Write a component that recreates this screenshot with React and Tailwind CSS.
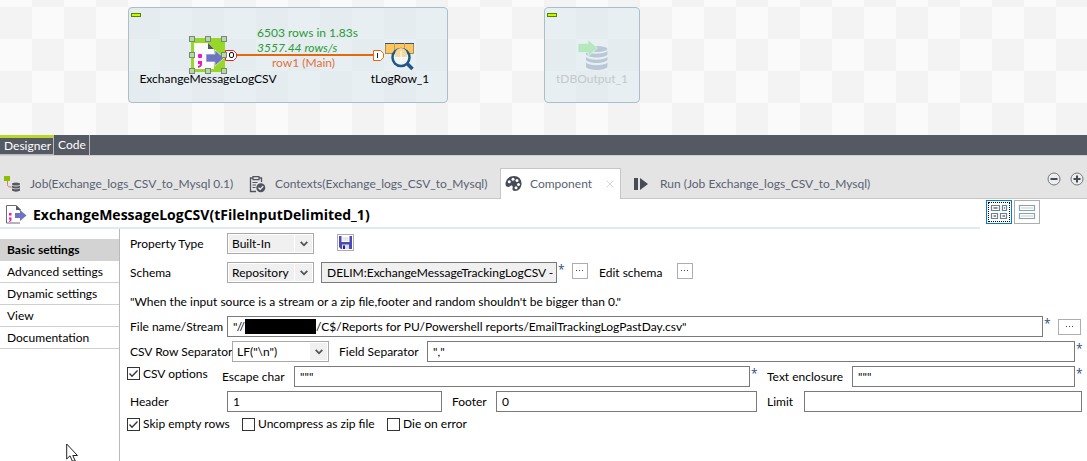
import React from "react";

function Collapse({ className }) {
  return (
    <button
      type="button"
      aria-label="Collapse"
      className={`absolute h-1 w-[10px] border border-[#5d8200] bg-[#c3fa00] ${className}`}
    />
  );
}

function DelimitedNode() {
  return (
    <svg className="absolute left-[188px] top-[35px]" width="52" height="40" viewBox="188 35 52 40">
      <rect x="191" y="38" width="34" height="34" fill="#96d728" />
      <path d="M194 43h14l6 6v20h-20z" fill="#fafafa" />
      <path d="M208 43v6h6z" fill="#555a62" />
      <rect x="198" y="54" width="4" height="4" rx="1" fill="#f512c0" />
      <path d="M198 61h4v3c0 2-1 3-4 4v-2c1 0 2-1 2-2h-2z" fill="#f512c0" />
      <path d="M206 54h9v-4l9 8-9 8v-4h-9z" fill="#6e73c3" stroke="#fff" strokeWidth=".6" />
      <path d="M225.500 50.500h8l3 3v4l-3 3h-8z" fill="#fff" stroke="#f02020" />
      <rect x="229.500" y="52.500" width="4" height="5" rx="1.500" fill="none" stroke="#111" />
      {[192, 208, 224].map((x) =>
        [39, 55, 71].map((y) =>
          x === 208 && y === 55 ? null : (
            <rect key={`${x}-${y}`} x={x - 2.5} y={y - 2.5} width="5" height="5" fill="#b2dca0" stroke="#7d847b" />
          )
        )
      )}
    </svg>
  );
}

function LogNode() {
  return (
    <svg className="absolute left-[372px] top-[41px]" width="46" height="32" viewBox="372 41 46 32">
      <path d="M373.500 50.500h7l3 3v4l-3 3h-7z" fill="#fff" stroke="#e2690f" />
      <path d="M377.500 53v5" stroke="#222" />
      <rect x="385.500" y="43.500" width="28" height="10" fill="#fcc661" stroke="#8a6a2c" strokeWidth=".7" />
      <path d="M385 43.500h29" stroke="#31587c" />
      <path d="M394.500 43v10M404.500 43v10" stroke="#d49a3c" />
      <circle cx="401" cy="57.500" r="8.500" fill="#f0f4f4" stroke="#1d5887" strokeWidth="2.500" />
      <path d="M395 54a6 6 0 0 1 12 0v3.500h-12z" fill="#f3d9a0" />
      <path d="M395 57.500h12M401 51v12" stroke="#fff" />
      <path d="M407 63.500l5.500 5.500" stroke="#1d5887" strokeWidth="3.500" />
    </svg>
  );
}

function DbNode() {
  return (
    <svg className="absolute left-[576px] top-[38px]" width="34" height="34" viewBox="576 38 34 34">
      <g fill="#b9c8d6">
        <ellipse cx="597" cy="49" rx="10.500" ry="3" />
        <path d="M586 51c3 3.500 18 3.500 21.500 0v3.500c-3 4-18.500 4-21.500 0z" />
        <path d="M586 57c3 3.500 18 3.500 21.500 0v3c-3 4-18.500 4-21.500 0z" />
        <path d="M586 62.500c3 3.500 18 3.500 21.500 0v4.500c-3 4-18.500 4-21.500 0z" />
      </g>
      <path d="M578 43.500h10v-4l9.500 8.500-9.500 8.500v-4h-10z" fill="#b5e8bf" stroke="#e6eff4" strokeWidth=".7" />
    </svg>
  );
}

function Canvas() {
  return (
    <section
      aria-label="Job canvas"
      className="relative h-[135px] overflow-hidden bg-[conic-gradient(#f3f3f3_25%,#fafafa_0_50%,#f3f3f3_0_75%,#fafafa_0)] bg-[length:64px_64px] bg-[position:32px_7px]"
    >
      <div className="absolute left-[128px] top-[7px] h-24 w-80 rounded border border-[#aabfcc] bg-[#dae7ee]/60" />
      <div className="absolute left-[544px] top-[7px] h-24 w-24 rounded border border-[#aabfcc] bg-[#dae7ee]/60" />
      <Collapse className="left-[131px] top-[13px]" />
      <Collapse className="left-[547px] top-[13px]" />
      <div className="absolute left-[236px] top-[54px] h-0.5 w-[138px] bg-[#e2690f]" />
      <DelimitedNode />
      <LogNode />
      <DbNode />
      <span className="absolute left-[257px] top-[25px] text-[#2a9b36]">6503 rows in 1.83s</span>
      <span className="absolute left-[257px] top-10 italic text-[#2a9b36]">3557.44 rows/s</span>
      <span className="absolute left-[272px] top-[55px] text-[#e2713a]">row1 (Main)</span>
      <span className="absolute left-[208px] top-[71px] -translate-x-1/2">ExchangeMessageLogCSV</span>
      <span className="absolute left-[400px] top-[71px] -translate-x-1/2">tLogRow_1</span>
      <span className="absolute left-[592px] top-[71px] -translate-x-1/2 text-[#c3c9cc]">tDBOutput_1</span>
    </section>
  );
}

function EditorTabs() {
  return (
    <nav className="flex h-5 bg-[#555963] text-white">
      <button type="button" className="w-[54px] border-r border-t-3 border-r-[#b8bac0] border-t-[#b9d62a] border-b border-b-[#b8bac0] pl-1 text-left leading-[14px]">
        Designer
      </button>
      <button type="button" className="w-9 border-r border-[#b8bac0] pl-1 text-left">
        Code
      </button>
    </nav>
  );
}

function JobIcon() {
  return (
    <svg width="17" height="17" viewBox="0 0 17 17" className="shrink-0">
      <path d="M3.500 5v3.500c0 2 1 2.500 4 2.500" fill="none" stroke="#e8706a" />
      <rect width="6" height="5" fill="#87c100" />
      <g fill="#55585f">
        <ellipse cx="12" cy="8" rx="4" ry="1.500" />
        <path d="M8 9.500c2 1.300 6 1.300 8 0v2c-2 1.300-6 1.300-8 0z" />
        <path d="M8 12.300c2 1.300 6 1.300 8 0v2.200c-2 1.500-6 1.500-8 0z" />
      </g>
    </svg>
  );
}

function ContextsIcon() {
  return (
    <svg width="17" height="17" viewBox="0 0 17 17" className="shrink-0">
      <path d="M4 2H1.500v13.500H7M10 2h2.500v4" fill="none" stroke="#50545e" strokeWidth="1.300" />
      <path d="M4 .6h6v3H4z" fill="#e4e4e4" stroke="#50545e" strokeWidth="1.200" />
      <path d="M3.500 6.500h5M3.500 9h3.500M3.500 11.500h3" stroke="#50545e" strokeWidth="1.200" />
      <circle cx="11.800" cy="11.700" r="4.500" fill="#50545e" />
      <path d="M9.500 11.600l1.700 1.800 3-3.300" fill="none" stroke="#fff" strokeWidth="1.300" />
    </svg>
  );
}

function PaletteIcon() {
  return (
    <svg width="17" height="16" viewBox="0 0 17 16" className="shrink-0">
      <path d="M9 0c4.500 0 7.500 3 7.500 7.500S13.500 15 10 15c-2 0-2.800-1-2.500-2.500C7.800 11 8 10 6.500 9.500 5.500 9.200 5 11 3.500 11 1.500 11 .3 9.500.5 7.500 1 3 4.500 0 9 0z" fill="#474b56" />
      <g fill="#fff">
        <circle cx="4.300" cy="5.800" r="1.500" />
        <circle cx="8" cy="3.200" r="1.500" />
        <circle cx="12" cy="4.500" r="1.500" />
        <circle cx="13.500" cy="8.500" r="1.500" />
        <circle cx="11" cy="11.800" r="1.500" />
      </g>
    </svg>
  );
}

function ViewTabs() {
  const tab = "flex items-center border-b border-[#c6c6c6] pt-[14px] text-left";
  return (
    <nav className="flex h-11 border-t border-[#cfcfcf] bg-[#e4e4e4] text-[#596273]">
      <button type="button" className={`${tab} w-[245px] gap-[9px] pl-1`}>
        <JobIcon />
        Job(Exchange_logs_CSV_to_Mysql 0.1)
      </button>
      <button type="button" className={`${tab} w-[255px] gap-[9px] pl-1`}>
        <ContextsIcon />
        Contexts(Exchange_logs_CSV_to_Mysql)
      </button>
      <div className="mt-3 flex w-[121px] items-center border border-b-0 border-[#c6c6c6] bg-white pl-1">
        <button type="button" className="flex items-center gap-2">
          <PaletteIcon />
          Component
        </button>
        <button type="button" aria-label="Close" className="ml-auto mr-1.5">
          <svg width="8" height="8" viewBox="0 0 8 8">
            <path d="M.5.500l7 7M7.500.500l-7 7" stroke="#d5d5d5" />
          </svg>
        </button>
      </div>
      <button type="button" className={`${tab} flex-1 gap-3 pl-[13px]`}>
        <svg width="14" height="13" viewBox="0 0 14 13" className="shrink-0">
          <path d="M0 0h4v12H0zM6 0l8 6-8 6z" fill="#474b56" />
        </svg>
        Run (Job Exchange_logs_CSV_to_Mysql)
      </button>
      <div className="flex gap-[9px] border-b border-[#c6c6c6] pr-[3px] pt-4">
        <button type="button" aria-label="Minimize" className="self-start">
          <svg width="14" height="14" viewBox="0 0 14 14">
            <circle cx="7" cy="7" r="6" fill="#ededed" stroke="#75777d" />
            <path d="M3.500 7h7" stroke="#474b56" strokeWidth="2" />
          </svg>
        </button>
        <button type="button" aria-label="Maximize" className="self-start">
          <svg width="14" height="14" viewBox="0 0 14 14">
            <circle cx="7" cy="7" r="6" fill="#ededed" stroke="#75777d" />
            <path d="M3.500 7h7M7 3.500v7" stroke="#474b56" strokeWidth="2" />
          </svg>
        </button>
      </div>
    </nav>
  );
}

function TitleBar() {
  return (
    <header className="flex h-[30px]">
      <div className="flex flex-1 items-center gap-1.5 border-b-2 border-[#dfe9f3] pl-1.5 pt-[3px]">
        <svg width="21" height="19" viewBox="0 0 21 19">
          <path d="M10 .500H.500v17.500H14M10 .500l4 4V6" fill="none" stroke="#6a6d74" />
          <path d="M10 0v5h5z" fill="#555a62" />
          <rect x="3" y="8" width="2.500" height="2.500" fill="#f512c0" />
          <path d="M3 12.500h2.500v2c0 1.500-.5 2-2.500 2.500v-1.200c.7 0 1.200-.5 1.200-1.300H3z" fill="#f512c0" />
          <path d="M9 8h5V5l6.500 5.500L14 16v-3H9z" fill="#6e73c3" />
        </svg>
        <h1 className="font-['Open_Sans','Noto_Sans',sans-serif] text-sm font-bold leading-5">
          ExchangeMessageLogCSV(tFileInputDelimited_1)
        </h1>
      </div>
      <div className="flex w-[107px] items-start gap-0.5 pl-1.5 pt-px">
        <button type="button" aria-label="Grid view" className="h-6 w-[26px] border border-[#0078d7] p-px">
          <span className="flex h-full w-full items-center justify-center border border-dotted border-black">
            <svg width="18" height="16" viewBox="0 0 18 16">
              <g fill="#fff" stroke="#67809b" strokeWidth="1.200">
                <path d="M1.500 1.500h8v5h-8zM12.500 1.500h4v5h-4zM1.500 9.500h6v5h-6zM10.500 9.500h6v5h-6z" />
              </g>
              <path d="M3.500 4h4M14 4h1M3.500 12h2.500M12.500 12h2.500" stroke="#9a8f88" strokeWidth="2" />
            </svg>
          </span>
        </button>
        <button type="button" aria-label="List view" className="flex h-6 w-[26px] items-center justify-center border border-[#adadad]">
          <svg width="18" height="16" viewBox="0 0 18 16">
            <path d="M1.500 1.500h15v5h-15zM1.500 9.500h15v5h-15z" fill="#fff" stroke="#7ba3c8" strokeWidth="1.200" />
            <path d="M3 4h12M3 12h12" stroke="#e8e4d0" strokeWidth="2" />
          </svg>
        </button>
      </div>
    </header>
  );
}

function Sidebar() {
  return (
    <aside className="relative w-[120px] shrink-0 border-r border-[#b9b9b9] pt-[10px]">
      <button type="button" className="block h-[22px] w-full bg-[#d3d3d3] pl-[7px] text-left font-bold">
        Basic settings
      </button>
      {["Advanced settings", "Dynamic settings", "View", "Documentation"].map((t) => (
        <button key={t} type="button" className="block h-[22px] w-full border-b border-[#cfcfcf] pl-[7px] text-left">
          {t}
        </button>
      ))}
      <svg className="absolute left-[66px] top-[214px]" width="13" height="18" viewBox="0 0 13 18">
        <path d="M.7 1v15l3.300-3.200L6.300 18h3l-2.500-5.500h4.700z" fill="#fff" stroke="#222" />
      </svg>
    </aside>
  );
}

function Label({ id, className, children }) {
  return (
    <label htmlFor={id} className={`shrink-0 whitespace-nowrap ${className}`}>
      {children}
    </label>
  );
}

function Field({ className, ...rest }) {
  return <input type="text" className={`h-[21px] min-w-0 border border-[#7a7a7a] bg-white px-[5px] outline-none ${className}`} {...rest} />;
}

function Star() {
  return (
    <span className="w-[7px] shrink-0 self-start pl-px font-['Open_Sans',sans-serif] leading-4 text-[#2d4f7c]">*</span>
  );
}

function Dropdown({ id, value, className, fill }) {
  return (
    <div className={`relative flex h-[21px] shrink-0 border border-[#a9a9a9] bg-white p-px ${className}`}>
      <select id={id} defaultValue={value} className={`min-w-0 flex-1 appearance-none pl-[3px] outline-none ${fill}`}>
        <option>{value}</option>
      </select>
      <span className="pointer-events-none ml-px flex w-[17px] items-center justify-center bg-[#f0f0f0]">
        <svg width="8" height="6" viewBox="0 0 8 6">
          <path d="M.7.800L4 4.300 7.300.800" fill="none" stroke="#50545a" strokeWidth="1.800" />
        </svg>
      </span>
    </div>
  );
}

function More({ label, className }) {
  return (
    <button type="button" aria-label={label} className={`flex h-4 shrink-0 items-center justify-center border border-[#adadad] bg-white ${className}`}>
      <svg width="8" height="2" viewBox="0 0 8 2">
        <path d="M0 0h1v1H0zM3 0h1v1H3zM6 0h1v1H6z" fill="#3c4a66" />
      </svg>
    </button>
  );
}

function Check({ id, checked, children, className }) {
  return (
    <span className={`flex shrink-0 items-center gap-[3px] ${className}`}>
      <span className="relative flex">
        <input id={id} type="checkbox" defaultChecked={checked} className="peer h-[13px] w-[13px] appearance-none border border-[#333] bg-white" />
        <svg className="pointer-events-none absolute inset-0 hidden peer-checked:block" width="13" height="13" viewBox="0 0 13 13">
          <path d="M2.500 6.500L5 9.200l5.500-5.700" fill="none" stroke="#333" strokeWidth="1.300" />
        </svg>
      </span>
      <label htmlFor={id} className="whitespace-nowrap">{children}</label>
    </span>
  );
}

function SettingsForm() {
  return (
    <form className="min-w-0 flex-1 pl-[7px] pr-[5px] pt-1">
      <div className="flex h-[21px] items-center">
        <Label id="ptype" className="w-[100px] pl-[3px]">Property Type</Label>
        <Dropdown id="ptype" value="Built-In" className="w-[87px]" fill="bg-[#f0f0f0]" />
        <button type="button" aria-label="Save" className="ml-[23px] mb-[3px] flex h-[17px] w-[17px] items-center justify-center border border-[#adadad]">
          <svg width="15" height="15" viewBox="0 0 15 15">
            <path d="M1 1h13v13H3l-2-2z" fill="#4a4ab8" />
            <path d="M3.500 1h8v6h-8z" fill="#fff" />
            <path d="M4.500 3h6M4.500 5h6" stroke="#d2d2d8" />
            <path d="M4 9.500h7V14H4z" fill="#dcdcf2" />
            <path d="M5 10.500h2V14H5z" fill="#24247c" />
          </svg>
        </button>
      </div>

      <div className="mt-2 flex h-[21px] items-center">
        <Label id="schema" className="w-[100px] pl-[3px]">Schema</Label>
        <Dropdown id="schema" value="Repository" className="w-[87px]" fill="bg-[#f0f0f0]" />
        <input
          type="text"
          readOnly
          aria-label="Schema source"
          defaultValue="DELIM:ExchangeMessageTrackingLogCSV -"
          className="ml-[7px] h-[21px] w-[236px] border border-[#7a7a7a] bg-[#f0f0f0] pl-[5px] outline-none"
        />
        <Star />
        <More label="Browse schema" className="ml-2 mb-1 w-4" />
        <span className="ml-[11px] w-[78px] whitespace-nowrap">Edit schema</span>
        <More label="Edit schema" className="mb-1 w-4" />
      </div>

      <p className="mb-[5px] mt-[10px] pl-[3px] leading-[18px]">
        "When the input source is a stream or a zip file,footer and random shouldn't be bigger than 0."
      </p>

      <div className="space-y-1">
        <div className="flex h-[21px] items-center">
          <Label id="file" className="w-[100px] pl-[3px]">File name/Stream</Label>
          <div className="flex h-[21px] min-w-0 flex-1 items-center border border-[#7a7a7a] pl-[5px]">
            <span>"//</span>
            <span className="h-[15px] w-[71px] shrink-0 bg-black" />
            <input
              id="file"
              type="text"
              defaultValue={'/C$/Reports for PU/Powershell reports/EmailTrackingLogPastDay.csv"'}
              className="min-w-0 flex-1 bg-transparent outline-none"
            />
          </div>
          <Star />
          <More label="Browse file" className="ml-2 mr-px w-[23px]" />
        </div>

        <div className="flex h-[21px] items-center">
          <Label id="rowsep" className="w-[105px] pl-[3px]">CSV Row Separator</Label>
          <Dropdown id="rowsep" value={'LF("\\n")'} className="w-[97px]" fill="bg-white" />
          <Label id="fieldsep" className="w-[98px] pl-[10px]">Field Separator</Label>
          <Field id="fieldsep" defaultValue={'","'} className="flex-1 [font-kerning:none]" />
          <Star />
        </div>

        <div className="flex h-[21px] items-center">
          <Check id="csvopt" checked className="mb-[6px] w-[95px]">CSV options</Check>
          <Label id="escape" className="w-[72px]">Escape char</Label>
          <Field id="escape" defaultValue={'"""'} className="flex-[444_1_0%]" />
          <Star />
          <Label id="enclosure" className="w-[95px] pl-[10px]">Text enclosure</Label>
          <Field id="enclosure" defaultValue={'"""'} className="flex-[211_1_0%]" />
          <Star />
        </div>

        <div className="flex h-[21px] items-center">
          <Label id="header" className="w-[100px] pl-[3px]">Header</Label>
          <Field id="header" defaultValue="1" className="flex-[203_1_0%]" />
          <Label id="footer" className="w-[54px] pl-[10px]">Footer</Label>
          <Field id="footer" defaultValue="0" className="flex-[249_1_0%]" />
          <Label id="limit" className="w-[47px] pl-[10px]">Limit</Label>
          <Field id="limit" defaultValue="" className="flex-[266_1_0%]" />
        </div>

        <div className="flex h-4 items-center">
          <Check id="skip" checked className="w-[115px]">Skip empty rows</Check>
          <Check id="unzip" className="w-[145px]">Uncompress as zip file</Check>
          <Check id="die">Die on error</Check>
        </div>
      </div>
    </form>
  );
}

export default function App() {
  return (
    <div className="flex h-screen flex-col overflow-hidden bg-white font-['Lato','Open_Sans',sans-serif] text-[12px] leading-4 text-black">
      <Canvas />
      <EditorTabs />
      <ViewTabs />
      <TitleBar />
      <main className="flex min-h-0 flex-1">
        <Sidebar />
        <SettingsForm />
      </main>
    </div>
  );
}
